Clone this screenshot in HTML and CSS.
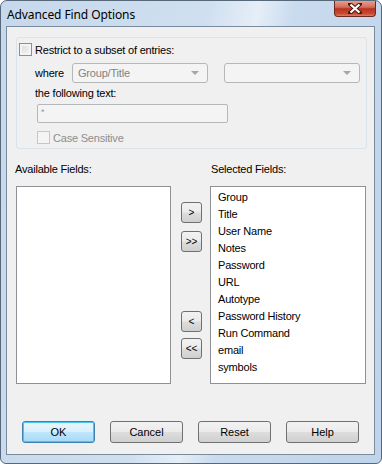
FILE: index.html
```html
<!DOCTYPE html>
<html lang="en">
<head>
    <meta charset="UTF-8">
    <title>Advanced Find Options</title>
    <link rel="stylesheet" href="styles.css">
</head>
<body>
    <div class="window">
        <div class="titlebar">
            <span class="title">Advanced Find Options</span>
            <div class="close-button">
                <svg width="14" height="11" viewBox="0 0 14 11">
                    <path d="M2 1 L12 10 M12 1 L2 10" stroke="#4a1a14" stroke-width="4" stroke-linecap="square"/>
                    <path d="M2.5 1.5 L11.5 9.5 M11.5 1.5 L2.5 9.5" stroke="#ffffff" stroke-width="2.2"/>
                </svg>
            </div>
        </div>
        <div class="client">
            <div class="group">
                <div class="check-row">
                    <span class="checkbox"></span>
                    <label>Restrict to a subset of entries:</label>
                </div>
                <div class="where-row">
                    <span class="where-label">where</span>
                    <div class="combo"><span>Group/Title</span><i class="arrow"></i></div>
                    <div class="combo combo-second"><span></span><i class="arrow"></i></div>
                </div>
                <div class="text-label">the following text:</div>
                <div class="textbox">*</div>
                <div class="check-row case-row">
                    <span class="checkbox disabled"></span>
                    <label class="disabled-text">Case Sensitive</label>
                </div>
            </div>

            <div class="fields">
                <div class="field-col">
                    <div class="field-label available-label">Available Fields:</div>
                    <div class="listbox available"></div>
                </div>
                <div class="move-buttons">
                    <button class="small-button add-one">&gt;</button>
                    <button class="small-button add-all">&gt;&gt;</button>
                    <button class="small-button remove-one">&lt;</button>
                    <button class="small-button remove-all">&lt;&lt;</button>
                </div>
                <div class="field-col">
                    <div class="field-label">Selected Fields:</div>
                    <div class="listbox selected">
                        <div class="item">Group</div>
                        <div class="item">Title</div>
                        <div class="item">User Name</div>
                        <div class="item">Notes</div>
                        <div class="item">Password</div>
                        <div class="item">URL</div>
                        <div class="item">Autotype</div>
                        <div class="item">Password History</div>
                        <div class="item">Run Command</div>
                        <div class="item">email</div>
                        <div class="item">symbols</div>
                    </div>
                </div>
            </div>

            <div class="dialog-buttons">
                <button class="push-button default">OK</button>
                <button class="push-button">Cancel</button>
                <button class="push-button">Reset</button>
                <button class="push-button">Help</button>
            </div>
        </div>
    </div>
</body>
</html>
```
FILE: styles.css
```css
* {
    box-sizing: border-box;
}
body {
    margin: 0;
    font-family: "Liberation Sans", Arial, sans-serif;
    font-size: 11px;
    letter-spacing: -0.2px;
    color: #000;
}
.window {
    width: 382px;
    height: 464px;
    border: 1px solid #57687a;
    border-radius: 7px 7px 6px 6px;
    padding: 0 6px 8px 5px;
    background: linear-gradient(100deg, #c6d8eb 0%, #cfdff0 45%, #e6eef7 56%, #c9dbee 64%, #bfd4ea 100%);
    overflow: hidden;
}
.titlebar {
    height: 25px;
    display: flex;
    align-items: flex-start;
    justify-content: space-between;
}
.title {
    font-family: "Noto Sans", "Open Sans", sans-serif;
    font-size: 12px;
    letter-spacing: -0.1px;
    margin: 5px 0 0 1px;
    color: #000;
}
.close-button {
    width: 42px;
    height: 17px;
    margin-top: -1px;
    margin-right: -1px;
    border: 1px solid #6d2a20;
    border-top: none;
    border-radius: 0 0 4px 4px;
    background: linear-gradient(#e9a896 0%, #d36d5a 45%, #b8321f 55%, #c74b32 85%, #e07d5d 100%);
    display: flex;
    align-items: center;
    justify-content: center;
}
.close-button svg {
    display: block;
}
.client {
    height: 429px;
    border: 1px solid #7a8b9c;
    background: #f0f0f0;
    padding: 10px 0 0 0;
}
.group {
    margin-left: 9px;
    width: 351px;
    height: 112px;
    border: 1px solid #dbe3e8;
    border-radius: 3px;
    padding: 5px 0 0 2px;
}
.check-row {
    display: flex;
    align-items: center;
    height: 13px;
}
.check-row label {
    margin-left: 3px;
}
.checkbox {
    width: 13px;
    height: 13px;
    border: 1px solid #8e8f8f;
    background: linear-gradient(135deg, #d8d8d8, #f8f8f8);
    box-shadow: inset 0 0 0 2px #f4f4f4;
}
.checkbox.disabled {
    border-color: #c6c6c6;
    background: #f4f4f4;
    box-shadow: none;
}
.disabled-text {
    color: #8d8d8d;
}
.where-row {
    display: flex;
    align-items: center;
    margin-top: 7px;
    padding-left: 16px;
}
.where-label {
    width: 37px;
}
.combo {
    width: 136px;
    height: 20px;
    border: 1px solid #b4b8bb;
    border-radius: 3px;
    background: #f4f4f4;
    color: #838383;
    display: flex;
    align-items: center;
    justify-content: space-between;
    padding: 0 8px 0 5px;
}
.combo-second {
    margin-left: 16px;
}
.arrow {
    width: 0;
    height: 0;
    border-left: 4px solid transparent;
    border-right: 4px solid transparent;
    border-top: 4px solid #a6a6a6;
}
.text-label {
    margin: 4px 0 0 16px;
    height: 13px;
    line-height: 13px;
}
.textbox {
    margin: 4px 0 0 18px;
    width: 191px;
    height: 19px;
    border: 1px solid #b4b8bb;
    border-radius: 2px;
    background: #f4f4f4;
    color: #9a9a9a;
    font-size: 9px;
    padding: 2px 0 0 3px;
}
.case-row {
    margin: 8px 0 0 18px;
}
.fields {
    display: flex;
    margin: 14px 0 0 9px;
}
.field-label {
    height: 13px;
    line-height: 13px;
    margin-bottom: 10px;
    margin-left: 1px;
}
.available-label {
    margin-left: -1px;
}
.listbox {
    height: 198px;
    border: 1px solid #8e9296;
    background: #fff;
}
.available {
    width: 155px;
}
.selected {
    width: 156px;
    padding: 2px 0 0 7px;
}
.item {
    height: 17px;
    line-height: 17px;
}
.move-buttons {
    display: flex;
    flex-direction: column;
    width: 21px;
    margin: 39px 8px 0 10px;
}
.small-button {
    width: 21px;
    height: 21px;
    padding: 0;
    font-family: "Liberation Sans", Arial, sans-serif;
    font-size: 10px;
    border: 1px solid #707070;
    border-radius: 3px;
    background: linear-gradient(#f2f2f2 0%, #ebebeb 48%, #dddddd 52%, #cfcfcf 100%);
    color: #000;
}
.add-all {
    margin-top: 8px;
}
.remove-one {
    margin-top: 59px;
}
.remove-all {
    margin-top: 6px;
}
.dialog-buttons {
    display: flex;
    margin: 37px 0 0 15px;
    gap: 15px;
}
.push-button {
    width: 73px;
    height: 22px;
    padding: 0;
    font-family: "Liberation Sans", Arial, sans-serif;
    font-size: 11px;
    border: 1px solid #707070;
    border-radius: 3px;
    background: linear-gradient(#f2f2f2 0%, #ebebeb 48%, #dddddd 52%, #cfcfcf 100%);
    color: #000;
}
.push-button.default {
    border-color: #3c7fb1;
    background: linear-gradient(#eaf6fd 0%, #d9f0fc 48%, #bee6fd 52%, #a7d9f5 100%);
    box-shadow: inset 0 0 0 1px #48c6f4;
}
```
